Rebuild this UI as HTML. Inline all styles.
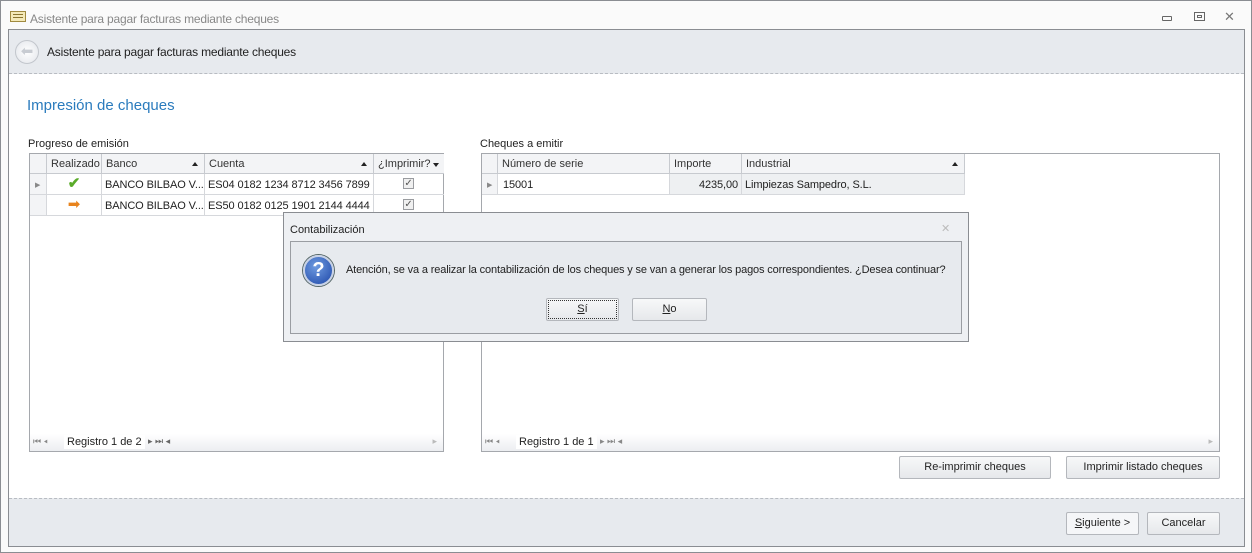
<!DOCTYPE html>
<html><head><meta charset="utf-8"><style>
*{box-sizing:border-box;margin:0;padding:0}
body{width:1252px;height:553px;position:relative;overflow:hidden;background:#fafafa;font-family:"Liberation Sans",sans-serif;font-size:11px;color:#222}
.a{position:absolute}
.grid{background:#fff;border:1px solid #a5a8ad}
.hc{position:absolute;top:0;height:20px;border-right:1px solid #c7cacf;border-bottom:1px solid #c7cacf;background:#f3f4f6;padding:4px 4px 0;color:#333}
.c{position:absolute;height:21px;border-right:1px solid #d6d8dc;border-bottom:1px solid #d6d8dc;padding:5px 3px 0;white-space:nowrap;overflow:hidden;letter-spacing:-0.1px}
.btn{position:absolute;border:1px solid #b4b7bc;border-radius:2px;background:linear-gradient(#f7f8f9,#e6e8eb);text-align:center;line-height:21px;color:#222}
.nav{position:absolute;left:0;right:0;bottom:0;height:17px;background:linear-gradient(#fff,#eceef1);font-size:11px;color:#222}
.cb{position:absolute;width:11px;height:11px;border:1px solid #9a9ca0;background:#f0f0f0;font-size:10px;line-height:9px;text-align:center;color:#555}
.tri{position:absolute;width:0;height:0;border-left:3px solid transparent;border-right:3px solid transparent}
</style></head><body>
<div class="a" style="left:0;top:0;width:1252px;height:553px;border:1px solid #8a8d92"></div>
<div class="a" style="left:10px;top:11px;width:16px;height:11px;border:1px solid #a08a40;background:#f4e9b8"></div>
<div class="a" style="left:13px;top:14px;width:10px;height:1px;background:#8a7530;box-shadow:0 3px 0 #8a7530"></div>
<div class="a" style="left:30px;top:12px;color:#888;font-size:12px;letter-spacing:-0.2px">Asistente para pagar facturas mediante cheques</div>
<div class="a" style="left:1162px;top:16px;width:10px;height:5px;border:1px solid #666;border-radius:1px"></div>
<div class="a" style="left:1194px;top:12px;width:11px;height:9px;border:1px solid #666"></div>
<div class="a" style="left:1197px;top:15px;width:5px;height:3px;border:1px solid #666"></div>
<div class="a" style="left:1224px;top:9px;font-size:13px;color:#777">✕</div>
<div class="a" style="left:8px;top:29px;width:1237px;height:518px;border:1px solid #8a8d92;background:#fff"></div>
<div class="a" style="left:9px;top:30px;width:1235px;height:44px;background:#e7eaee;border-bottom:1px dashed #b8bcc2"></div>
<div class="a" style="left:15px;top:40px;width:24px;height:24px;border-radius:50%;border:1px solid #c2c6cc;background:radial-gradient(#fff,#e2e5ea);color:#c8ccd2;font-size:15px;text-align:center;line-height:21px">⬅</div>
<div class="a" style="left:47px;top:45px;font-size:12px;color:#222;letter-spacing:-0.2px">Asistente para pagar facturas mediante cheques</div>
<div class="a" style="left:27px;top:97px;font-size:15px;color:#2a7bbd">Impresión de cheques</div>
<div class="a" style="left:28px;top:138px">Progreso de emisión</div>
<div class="a" style="left:480px;top:138px">Cheques a emitir</div>

<div class="a grid" style="left:29px;top:153px;width:415px;height:299px">
 <div class="hc" style="left:0;width:17px"></div>
 <div class="hc" style="left:17px;width:55px">Realizado</div>
 <div class="hc" style="left:72px;width:103px">Banco<div class="tri" style="right:6px;top:8px;border-bottom:4px solid #222"></div></div>
 <div class="hc" style="left:175px;width:169px">Cuenta<div class="tri" style="right:6px;top:8px;border-bottom:4px solid #222"></div></div>
 <div class="hc" style="left:344px;width:70px;border-right:0">¿Imprimir?<div class="tri" style="right:5px;top:9px;border-top:4px solid #222"></div></div>
 <div class="c" style="left:0;top:20px;width:17px;background:#f3f4f6;color:#888;font-size:7px;padding:7px 5px">▶</div>
 <div class="c" style="left:17px;top:20px;width:55px;text-align:center;color:#5aab2a;font-size:15px;padding:0;line-height:20px;font-weight:bold">✔</div>
 <div class="c" style="left:72px;top:20px;width:103px">BANCO BILBAO V...</div>
 <div class="c" style="left:175px;top:20px;width:169px">ES04 0182 1234 8712 3456 7899</div>
 <div class="c" style="left:344px;top:20px;width:70px;border-right:0"><div class="cb" style="left:29px;top:4px">✓</div></div>
 <div class="c" style="left:0;top:41px;width:17px;background:#f3f4f6"></div>
 <div class="c" style="left:17px;top:41px;width:55px;text-align:center;color:#e8841e;font-size:15px;padding:0;line-height:20px">➡</div>
 <div class="c" style="left:72px;top:41px;width:103px">BANCO BILBAO V...</div>
 <div class="c" style="left:175px;top:41px;width:169px">ES50 0182 0125 1901 2144 4444</div>
 <div class="c" style="left:344px;top:41px;width:70px;border-right:0"><div class="cb" style="left:29px;top:4px">✓</div></div>
 <div class="nav"><span class="a" style="left:3px;top:2px;color:#888;font-size:9px">⏮ ◂</span><span class="a" style="left:34px;top:1px;background:#fff;padding:1px 3px">Registro 1 de 2</span><span class="a" style="left:118px;top:2px;color:#666;font-size:9px">▸ ⏭ ◂</span><span class="a" style="right:6px;top:2px;color:#bbb;font-size:9px">▸</span></div>
</div>

<div class="a grid" style="left:481px;top:153px;width:739px;height:299px">
 <div class="hc" style="left:0;width:16px"></div>
 <div class="hc" style="left:16px;width:172px">Número de serie</div>
 <div class="hc" style="left:188px;width:72px">Importe</div>
 <div class="hc" style="left:260px;width:223px">Industrial<div class="tri" style="right:6px;top:8px;border-bottom:4px solid #222"></div></div>
 <div class="c" style="left:0;top:20px;width:16px;background:#f3f4f6;color:#888;font-size:7px;padding:7px 5px">▶</div>
 <div class="c" style="left:16px;top:20px;width:172px;padding-left:5px">15001</div>
 <div class="c" style="left:188px;top:20px;width:72px;text-align:right;background:#eef0f2">4235,00</div>
 <div class="c" style="left:260px;top:20px;width:223px;background:#eef0f2">Limpiezas Sampedro, S.L.</div>
 <div class="nav"><span class="a" style="left:3px;top:2px;color:#888;font-size:9px">⏮ ◂</span><span class="a" style="left:34px;top:1px;background:#fff;padding:1px 3px">Registro 1 de 1</span><span class="a" style="left:118px;top:2px;color:#888;font-size:9px">▸ ⏭ ◂</span><span class="a" style="right:6px;top:2px;color:#bbb;font-size:9px">▸</span></div>
</div>

<div class="btn" style="left:899px;top:456px;width:152px;height:23px">Re-imprimir cheques</div>
<div class="btn" style="left:1066px;top:456px;width:154px;height:23px">Imprimir listado cheques</div>

<div class="a" style="left:9px;top:498px;width:1235px;height:48px;background:#e7eaee;border-top:1px dashed #b8bcc2"></div>
<div class="btn" style="left:1066px;top:512px;width:73px;height:23px;background:#f5f6f8"><u>S</u>iguiente &gt;</div>
<div class="btn" style="left:1147px;top:512px;width:73px;height:23px">Cancelar</div>

<div class="a" style="left:283px;top:212px;width:686px;height:130px;background:#eef0f3;border:1px solid #8a8d92"></div>
<div class="a" style="left:290px;top:224px">Contabilización</div>
<div class="a" style="left:941px;top:222px;color:#bbb;font-size:11px">✕</div>
<div class="a" style="left:290px;top:241px;width:672px;height:93px;background:#e7eaee;border:1px solid #9a9da2"></div>
<div class="a" style="left:303px;top:255px;width:31px;height:31px;border-radius:50%;background:radial-gradient(circle at 40% 35%,#6f9be0,#1d47a8);border:2px solid #c8d2e6;box-shadow:0 0 0 1px #566;color:#fff;font-weight:bold;font-size:20px;text-align:center;line-height:27px">?</div>
<div class="a" style="left:346px;top:264px;letter-spacing:-0.15px;white-space:nowrap">Atención, se va a realizar la contabilización de los cheques y se van a generar los pagos correspondientes. ¿Desea continuar?</div>
<div class="btn" style="left:546px;top:298px;width:73px;height:23px;outline:1px dotted #333;outline-offset:-3px"><u>S</u>í</div>
<div class="btn" style="left:632px;top:298px;width:75px;height:23px"><u>N</u>o</div>
</body></html>
